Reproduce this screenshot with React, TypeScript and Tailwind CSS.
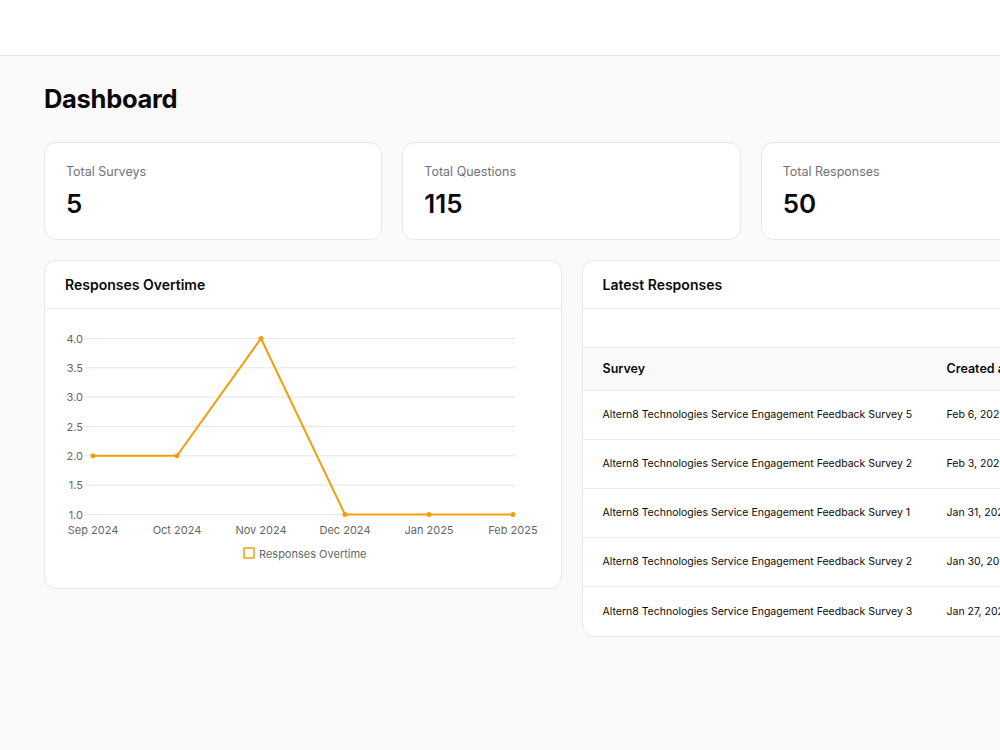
import React from "react";

const points = [
  { label: "Sep 2024", v: 2 },
  { label: "Oct 2024", v: 2 },
  { label: "Nov 2024", v: 4 },
  { label: "Dec 2024", v: 1 },
  { label: "Jan 2025", v: 1 },
  { label: "Feb 2025", v: 1 },
];

const rows = [
  { s: "Altern8 Technologies Service Engagement Feedback Survey 5", d: "Feb 6, 2025" },
  { s: "Altern8 Technologies Service Engagement Feedback Survey 2", d: "Feb 3, 2025" },
  { s: "Altern8 Technologies Service Engagement Feedback Survey 1", d: "Jan 31, 2025" },
  { s: "Altern8 Technologies Service Engagement Feedback Survey 2", d: "Jan 30, 2025" },
  { s: "Altern8 Technologies Service Engagement Feedback Survey 3", d: "Jan 27, 2025" },
];

function Chart() {
  const x0 = 48;
  const dx = 84;
  const yFor = (v: number) => 29.5 + (4 - v) * 58.67;
  const ticks = [4, 3.5, 3, 2.5, 2, 1.5, 1];
  const pts = points.map((p, i) => [x0 + i * dx, yFor(p.v)]);
  return (
    <svg width="515" height="279" className="block" style={{ fontFamily: "Inter, sans-serif" }}>
      {ticks.map((t) => (
        <g key={t}>
          <line x1={40} x2={470} y1={yFor(t)} y2={yFor(t)} stroke="#e5e5e5" strokeWidth={1} />
          <text x={38} y={yFor(t) + 4} fontSize={11} fill="#666" textAnchor="end">
            {t.toFixed(1)}
          </text>
        </g>
      ))}
      <polyline
        points={pts.map((p) => p.join(",")).join(" ")}
        fill="none"
        stroke="#f59e0b"
        strokeWidth={2}
      />
      {pts.map((p, i) => (
        <circle key={i} cx={p[0]} cy={p[1]} r={2.5} fill="#f59e0b" />
      ))}
      {points.map((p, i) => (
        <text key={p.label} x={x0 + i * dx} y={225} fontSize={11} fill="#666" textAnchor="middle">
          {p.label}
        </text>
      ))}
      <rect x={199} y={239} width={10} height={10} fill="none" stroke="#f59e0b" strokeWidth={1.5} />
      <text x={214} y={249} fontSize={11} fill="#666">
        Responses Overtime
      </text>
    </svg>
  );
}

export default function App() {
  return (
    <div
      className="w-screen h-[750px] overflow-hidden bg-[#fafafa] text-[#0a0a0a]"
      style={{ fontFamily: "Inter, 'Noto Sans', sans-serif" }}
    >
      <div className="h-14 bg-white border-b border-[#e8e8e8]" />
      <div className="w-[1143px] px-11 pt-[27px]">
        <h1 className="text-[25.5px] leading-8 font-bold tracking-[-0.3px] mb-[27px]">Dashboard</h1>
        <div className="grid grid-cols-3 gap-5">
          {[
            ["Total Surveys", "5"],
            ["Total Questions", "115"],
            ["Total Responses", "50"],
          ].map(([l, v]) => (
            <div key={l} className="bg-white border border-[#e7e7e7] rounded-xl px-[21px] pt-[19px] pb-[19px]">
              <div className="text-[12.5px] leading-5 text-[#71717a]">{l}</div>
              <div className="mt-1.5 text-[26px] leading-8 font-semibold">{v}</div>
            </div>
          ))}
        </div>
        <div className="grid grid-cols-2 gap-5 mt-[20px] items-start">
          <div className="bg-white border border-[#e7e7e7] rounded-xl overflow-hidden">
            <div className="h-[48px] flex items-center px-[20px] border-b border-[#ebebeb]">
              <div className="text-[14px] font-semibold">Responses Overtime</div>
            </div>
            <Chart />
          </div>
          <div className="bg-white border border-[#e7e7e7] rounded-xl overflow-hidden">
            <div className="h-[48px] flex items-center px-[20px] border-b border-[#ebebeb]">
              <div className="text-[14px] font-semibold">Latest Responses</div>
            </div>
            <div className="h-[39px] border-b border-[#ebebeb]" />
            <div className="h-[43px] flex items-center bg-[#fafafa] border-b border-[#ebebeb] text-[12.5px] font-semibold">
              <div className="w-[344px] pl-[20px]">Survey</div>
              <div className="pl-[20px] whitespace-nowrap">Created at</div>
            </div>
            {rows.map((r, i) => (
              <div
                key={i}
                className={`h-[49px] flex items-center text-[10.5px] ${i < rows.length - 1 ? "border-b border-[#ebebeb]" : ""}`}
              >
                <div className="w-[344px] pl-[20px] whitespace-nowrap">{r.s}</div>
                <div className="pl-[20px] whitespace-nowrap">{r.d}</div>
              </div>
            ))}
          </div>
        </div>
      </div>
    </div>
  );
}
